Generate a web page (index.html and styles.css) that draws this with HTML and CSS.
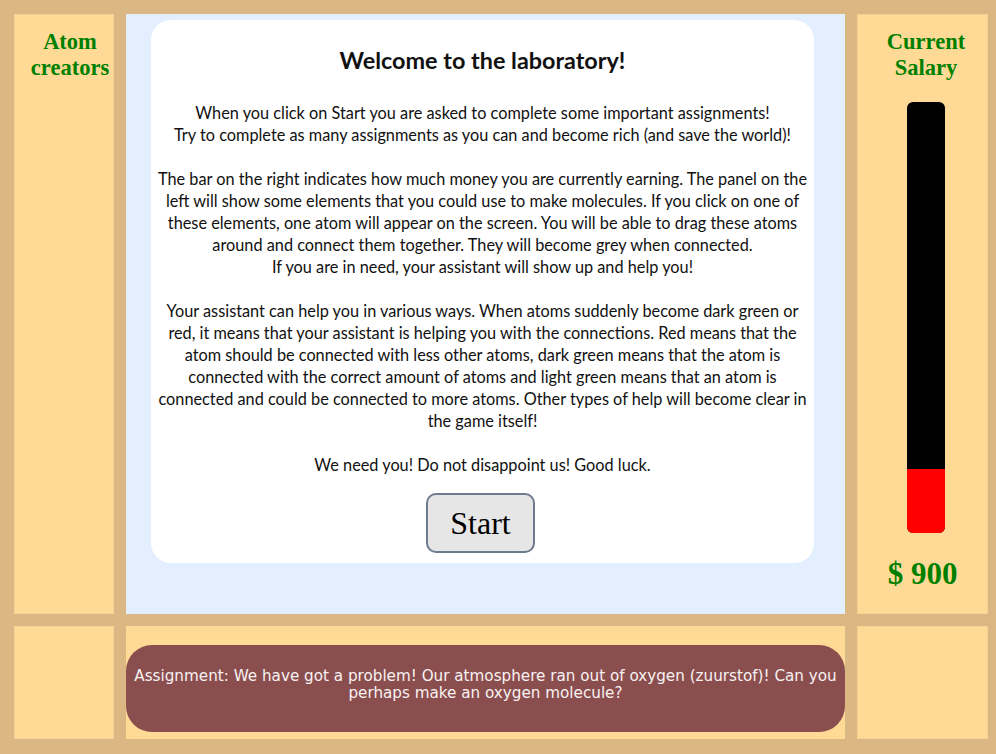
FILE: index.html
```html
<!DOCTYPE html>
<html>
<head>
<meta charset="utf-8">
<link rel="stylesheet" href="styles.css">
</head>
<body>
<div class="frame">
  <div class="panel side left">
    <div class="side-title">Atom<br>creators</div>
  </div>
  <div class="stage">
    <div class="card">
      <h1 class="card-title">Welcome to the laboratory!</h1>
      <p class="intro">When you click on Start you are asked to complete some important assignments!<br>
Try to complete as many assignments as you can and become rich (and save the world)!<br>
<br>
The bar on the right indicates how much money you are currently earning. The panel on the<br>
left will show some elements that you could use to make molecules. If you click on one of<br>
these elements, one atom will appear on the screen. You will be able to drag these atoms<br>
around and connect them together. They will become grey when connected.<br>
If you are in need, your assistant will show up and help you!<br>
<br>
Your assistant can help you in various ways. When atoms suddenly become dark green or<br>
red, it means that your assistant is helping you with the connections. Red means that the<br>
atom should be connected with less other atoms, dark green means that the atom is<br>
connected with the correct amount of atoms and light green means that an atom is<br>
connected and could be connected to more atoms. Other types of help will become clear in<br>
the game itself!<br>
<br>
We need you! Do not disappoint us! Good luck.</p>
      <button class="start-btn">Start</button>
    </div>
  </div>
  <div class="panel side right">
    <div class="side-title">Current<br>Salary</div>
    <div class="salary-bar"><div class="salary-fill" style="height: 64px"></div></div>
    <div class="salary-amount">$ 900</div>
  </div>
  <div class="panel"></div>
  <div class="panel bottom-center">
    <div class="assignment">Assignment: We have got a problem! Our atmosphere ran out of oxygen (zuurstof)! Can you<br>perhaps make an oxygen molecule?</div>
  </div>
  <div class="panel"></div>
</div>
</body>
</html>
```
FILE: styles.css
```css
html, body {
  margin: 0;
  padding: 0;
}
body {
  background: #dbb784;
  width: 996px;
  height: 754px;
  overflow: hidden;
}
.frame {
  display: grid;
  grid-template-columns: 100px 719px 131px;
  grid-template-rows: 600px 113px;
  column-gap: 12px;
  row-gap: 12px;
  padding: 14px 0 0 14px;
}
.panel {
  background: #ffda96;
  box-sizing: border-box;
  border: 1px solid #f6d193;
}
.side {
  display: flex;
  flex-direction: column;
  align-items: center;
}
.side.left {
  padding-left: 12px;
}
.side.right {
  padding-left: 7px;
}
.side-title {
  font-family: "Liberation Serif", "Times New Roman", serif;
  font-weight: bold;
  font-size: 22.5px;
  line-height: 26px;
  color: #008000;
  text-align: center;
  padding-top: 14px;
}
.salary-bar {
  margin-top: 21px;
  width: 38px;
  height: 431px;
  background: #000;
  border-radius: 6px;
  overflow: hidden;
  display: flex;
  flex-direction: column;
  justify-content: flex-end;
}
.salary-fill {
  background: #ff0000;
  width: 100%;
}
.salary-amount {
  margin-top: 24px;
  margin-right: 7px;
  font-family: "Liberation Serif", "Times New Roman", serif;
  font-weight: bold;
  font-size: 31px;
  line-height: 34px;
  color: #008000;
}
.stage {
  background: #e3efff;
  padding: 6px 31px 0 25px;
}
.card {
  background: #fff;
  border-radius: 20px;
  height: 543px;
  box-sizing: border-box;
  padding: 26px 4px 10px;
  display: flex;
  flex-direction: column;
  align-items: center;
  font-family: Lato, "Open Sans", sans-serif;
  color: #111;
}
.card-title {
  margin: 0;
  font-size: 23.4px;
  line-height: 28px;
  font-weight: bold;
}
.intro {
  margin: 28px 0 0;
  font-size: 16.3px;
  line-height: 22px;
  text-align: center;
  white-space: nowrap;
}
.start-btn {
  margin-top: 17px;
  margin-right: 4px;
  width: 109px;
  height: 61px;
  background: #e6e6e6;
  border: 2px solid #6e7b8f;
  border-radius: 10px;
  font-family: "Liberation Serif", "Times New Roman", serif;
  font-size: 32px;
  color: #000;
  padding: 0;
}
.bottom-center {
  border: none;
  padding-top: 19px;
}
.assignment {
  background: #8b4e4e;
  color: #f8f2f2;
  height: 87px;
  box-sizing: border-box;
  border-radius: 26px;
  padding: 23px 4px 0;
  text-align: center;
  font-family: "DejaVu Sans", sans-serif;
  font-size: 15.2px;
  line-height: 17px;
  white-space: nowrap;
}
```
